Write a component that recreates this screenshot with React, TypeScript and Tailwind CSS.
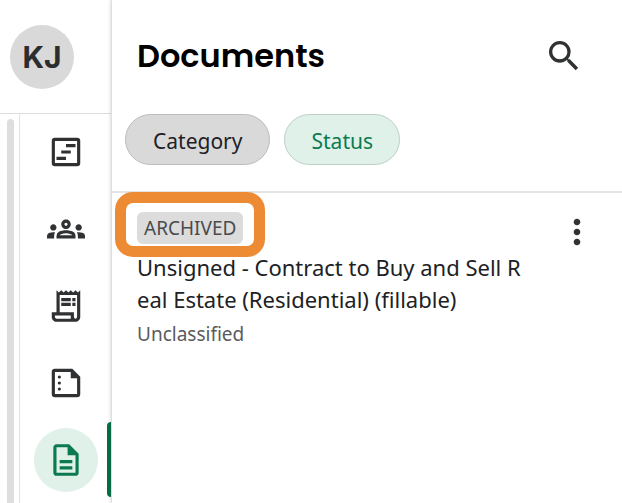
import type { ReactNode } from "react";
import {
  MdMoreVert,
  MdOutlineDescription,
  MdOutlineGroups,
  MdOutlineReceiptLong,
  MdSearch,
} from "react-icons/md";

function TimelineIcon() {
  return (
    <svg viewBox="0 0 24 24" className="size-[38px]" fill="currentColor" aria-hidden="true">
      <path
        fillRule="evenodd"
        d="M5 3h14a2 2 0 0 1 2 2v14a2 2 0 0 1-2 2H5a2 2 0 0 1-2-2V5a2 2 0 0 1 2-2zm0 2v14h14V5z"
      />
      <path d="M12 7h6v2h-6zM9 11h6v2H9zM6 15h6v2H6z" />
    </svg>
  );
}

function NoteIcon() {
  return (
    <svg viewBox="0 0 24 24" className="size-[38px]" fill="currentColor" aria-hidden="true">
      <path
        fillRule="evenodd"
        d="M5 3h11l5 5v11a2 2 0 0 1-2 2H5a2 2 0 0 1-2-2V5a2 2 0 0 1 2-2zm0 2v14h14V9h-4V5z"
      />
      <circle cx="7.8" cy="8.2" r="1" />
      <circle cx="7.8" cy="12" r="1" />
      <circle cx="7.8" cy="15.8" r="1" />
    </svg>
  );
}

function NavItem({ label, active, children }: { label: string; active?: boolean; children: ReactNode }) {
  return (
    <li className="relative flex h-[77px] items-center justify-center pb-0.5">
      <a
        href="#"
        aria-label={label}
        aria-current={active ? "page" : undefined}
        className={
          active
            ? "flex size-16 items-center justify-center rounded-full bg-[#dff1e9] text-[#0b7a50]"
            : "flex size-16 items-center justify-center rounded-full text-[#303133]"
        }
      >
        {children}
      </a>
      {active && <span className="absolute top-0 right-0 bottom-0.5 w-1 rounded-l-full bg-[#086b46]" />}
    </li>
  );
}

export default function App() {
  return (
    <div className="flex h-screen overflow-hidden bg-white font-['Segoe_UI','Noto_Sans',sans-serif] text-[#202124]">
      <aside className="flex w-[111px] shrink-0 flex-col">
        <div className="h-[114px] shrink-0 border-b border-[#dcdcdc] px-2.5 pt-[25px]">
          <div className="flex size-16 items-center justify-center rounded-full bg-[#d9d9d9] font-['Inter',sans-serif] text-[30px] font-bold text-[#2c2d2f]">
            KJ
          </div>
        </div>
        <div className="flex min-h-0 flex-1">
          <div className="w-5 shrink-0 border-r border-[#e2e2e2] pl-[7px] pt-[5px]">
            <div className="h-full w-[7px] rounded-t-full bg-[#dedede]" />
          </div>
          <nav aria-label="Main" className="flex-1">
            <ul>
              <NavItem label="Timeline">
                <TimelineIcon />
              </NavItem>
              <NavItem label="People">
                <MdOutlineGroups size={38} />
              </NavItem>
              <NavItem label="Receipts">
                <MdOutlineReceiptLong size={38} />
              </NavItem>
              <NavItem label="Notes">
                <NoteIcon />
              </NavItem>
              <NavItem label="Documents" active>
                <MdOutlineDescription size={38} />
              </NavItem>
            </ul>
          </nav>
        </div>
      </aside>

      <main className="min-w-0 flex-1 border-l border-[#dedede] shadow-[-1px_0_3px_rgba(0,0,0,0.12)]">
        <header className="h-[193px] border-b-2 border-[#e4e4e4]">
          <div className="flex h-[114px] items-center justify-between pr-[38px] pb-0.5 pl-[25px]">
            <h1 className="font-['Poppins','Inter',sans-serif] text-[32px] leading-none font-semibold text-black">
              Documents
            </h1>
            <button type="button" aria-label="Search" className="text-[#303133]">
              <MdSearch size={40} />
            </button>
          </div>
          <div className="flex gap-3.5 pl-[13px]">
            <button
              type="button"
              className="h-[51px] rounded-full border border-[#bcbcbc] bg-[#d9d9d9] px-[27px] pt-1 text-[21px] text-[#202124]"
            >
              Category
            </button>
            <button
              type="button"
              className="h-[51px] rounded-full border border-[#bccfc6] bg-[#dff1e9] px-[26px] pt-1 text-[21px] text-[#0b7a50]"
            >
              Status
            </button>
          </div>
        </header>

        <article className="flex items-start justify-between px-[25px] pt-[19px]">
          <div>
            <div className="relative w-fit rounded-md bg-[#dcdcdc] px-[7px] text-[19px] leading-8 text-[#4a4b4d]">
              ARCHIVED
              <span className="pointer-events-none absolute -inset-x-[22px] -top-5 -bottom-[13px] rounded-[18px] border-[11px] border-[#ec8b34]" />
            </div>
            <h2 className="mt-[7px] text-[22px] leading-8 text-[#202124]">
              Unsigned - Contract to Buy and Sell R
              <br />
              eal Estate (Residential) (fillable)
            </h2>
            <p className="mt-[3px] text-[19px] leading-8 text-[#5a5b5d]">Unclassified</p>
          </div>
          <button type="button" aria-label="More options" className="text-[#303133]">
            <MdMoreVert size={40} />
          </button>
        </article>
      </main>
    </div>
  );
}
